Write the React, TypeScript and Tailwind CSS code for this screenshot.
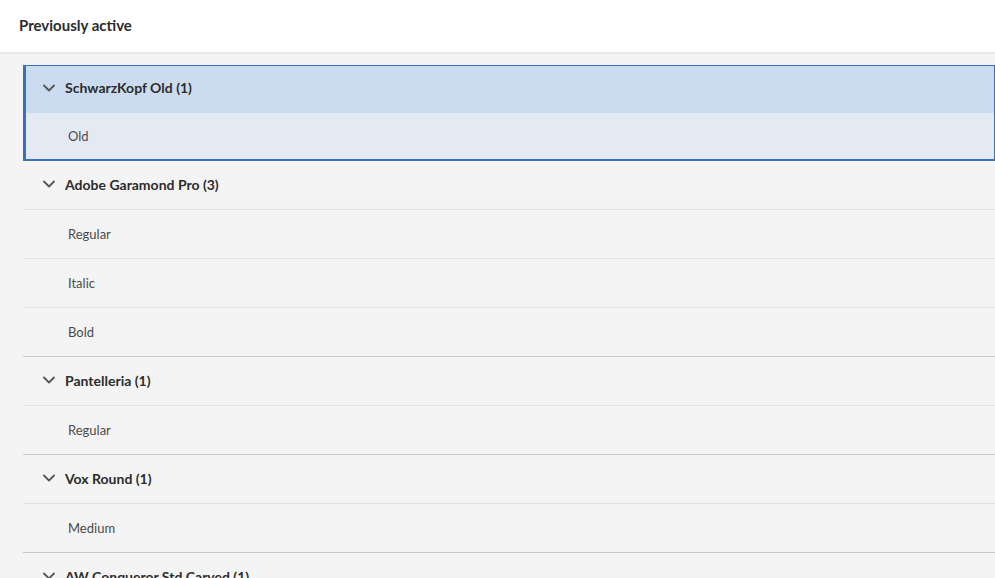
type Group = { name: string; styles: string[] };

const groups: Group[] = [
  { name: 'SchwarzKopf Old (1)', styles: ['Old'] },
  { name: 'Adobe Garamond Pro (3)', styles: ['Regular', 'Italic', 'Bold'] },
  { name: 'Pantelleria (1)', styles: ['Regular'] },
  { name: 'Vox Round (1)', styles: ['Medium'] },
  { name: 'AW Conqueror Std Carved (1)', styles: ['Regular'] },
];

function Chevron() {
  return (
    <svg width="12" height="8" viewBox="0 0 12 8" fill="none" className="shrink-0">
      <path d="M1 1.5 6 6.5 11 1.5" stroke="#555" strokeWidth="1.8" strokeLinecap="round" strokeLinejoin="round" />
    </svg>
  );
}

function FontGroup({ group, active }: { group: Group; active: boolean }) {
  if (active) {
    return (
      <div className="border border-[#3a6fc0] border-l-[3px] border-b-2">
        <div className="flex items-center h-[47px] bg-[#cbdcf0] pl-[17px] pb-[4px]">
          <Chevron />
          <span className="ml-[10px] text-[14px] font-bold text-[#2c2c2c]">{group.name}</span>
        </div>
        {group.styles.map((s) => (
          <div key={s} className="flex items-center h-[46px] bg-[#e3eaf4] pl-[42px] pt-[2px]">
            <span className="text-[13px] text-[#4b4b4b]">{s}</span>
          </div>
        ))}
      </div>
    );
  }
  return (
    <div className="border-b border-[#c9c9c9]">
      <div className="flex items-center h-[48px] pl-[20px] pb-[2px]">
        <Chevron />
        <span className="ml-[10px] text-[14px] font-bold text-[#2c2c2c]">{group.name}</span>
      </div>
      {group.styles.map((s) => (
        <div key={s} className="flex items-center h-[49px] pl-[45px] pt-[2px] border-t border-[#e2e2e2]">
          <span className="text-[13px] text-[#4b4b4b]">{s}</span>
        </div>
      ))}
    </div>
  );
}

export default function App() {
  return (
    <div
      className="w-[995px] h-[578px] overflow-hidden bg-[#f4f4f4]"
      style={{ fontFamily: 'Lato, "Open Sans", sans-serif' }}
    >
      <div className="h-[54px] bg-white border-b-2 border-[#e6e6e6] flex items-center pl-[19px] pb-[1px]">
        <h2 className="text-[15px] font-bold text-[#2c2c2c]">Previously active</h2>
      </div>
      <div className="pl-[23px] pt-[11px]">
        {groups.map((g, i) => (
          <FontGroup key={g.name} group={g} active={i === 0} />
        ))}
      </div>
    </div>
  );
}
